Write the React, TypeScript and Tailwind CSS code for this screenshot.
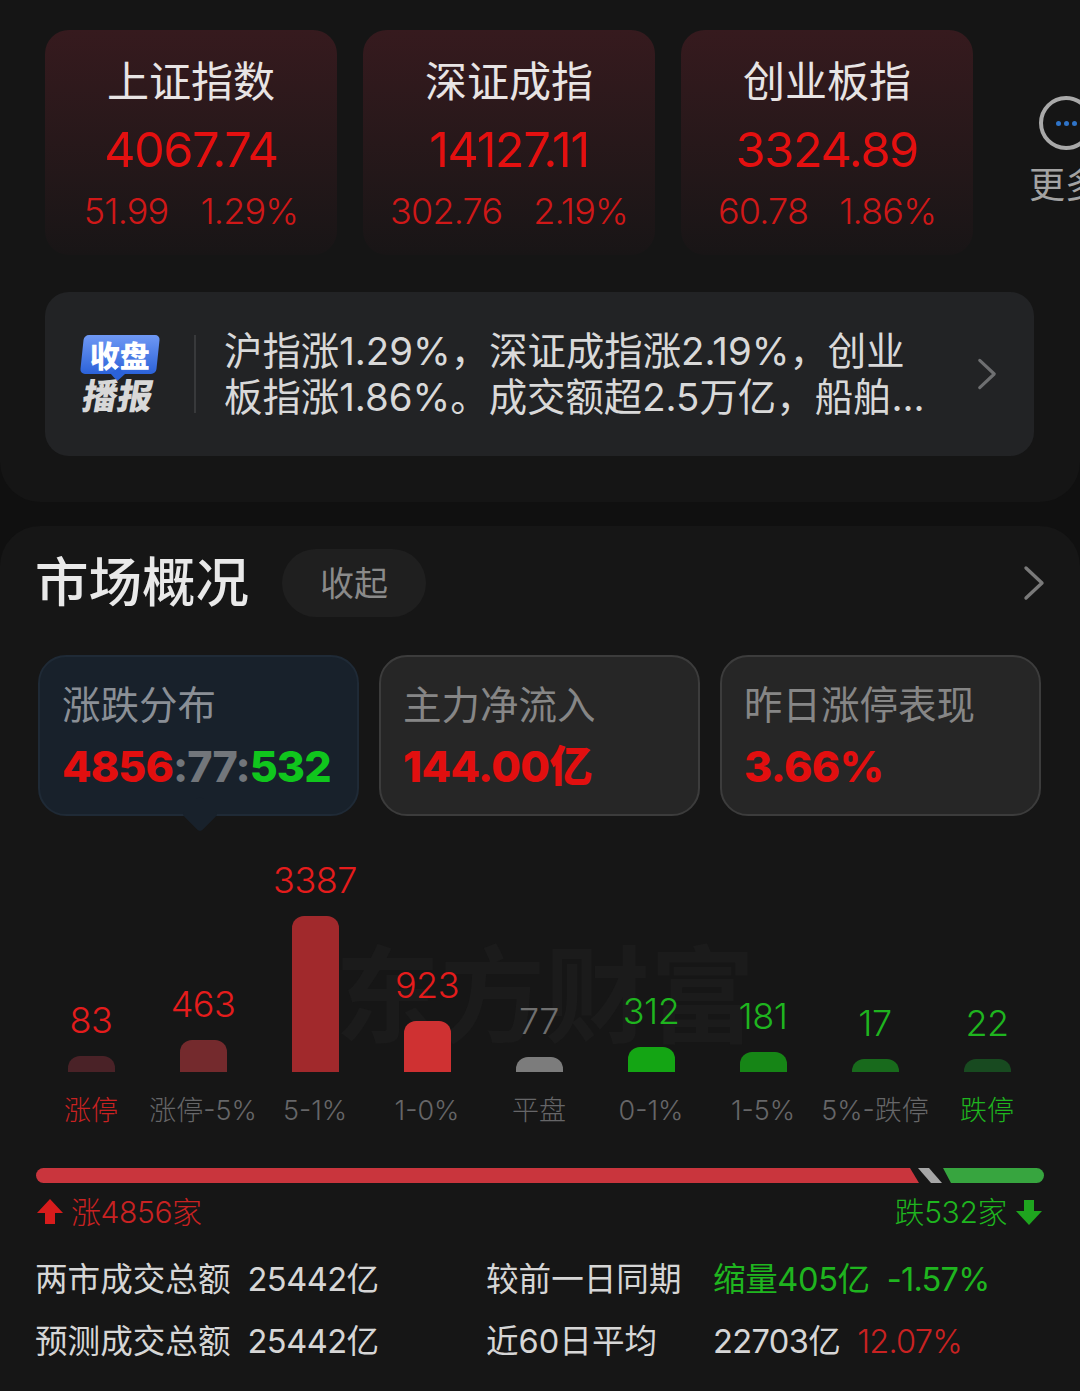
import React from "react";

const indexCards = [
  { name: "上证指数", value: "4067.74", diff: "51.99", pct: "1.29%", gap: "gap-[32px]" },
  { name: "深证成指", value: "14127.11", diff: "302.76", pct: "2.19%", gap: "gap-[31px]" },
  { name: "创业板指", value: "3324.89", diff: "60.78", pct: "1.86%", gap: "gap-[31px]" },
];

const tabs = [
  { label: "主力净流入", value: "144.00亿" },
  { label: "昨日涨停表现", value: "3.66%" },
];

const bars = [
  { value: "83", label: "涨停", h: "h-[16px]", bar: "bg-[#4a2227]", text: "text-[#e51c1c]", labelText: "text-[#c92222]" },
  { value: "463", label: "涨停-5%", h: "h-[32px]", bar: "bg-[#742a2d]", text: "text-[#e51c1c]", labelText: "text-[#666668]" },
  { value: "3387", label: "5-1%", h: "h-[156px]", bar: "bg-[#a1292c]", text: "text-[#e51c1c]", labelText: "text-[#666668]" },
  { value: "923", label: "1-0%", h: "h-[51px]", bar: "bg-[#cf3132]", text: "text-[#e51c1c]", labelText: "text-[#666668]" },
  { value: "77", label: "平盘", h: "h-[15px]", bar: "bg-[#7c7c7c]", text: "text-[#6f6f6f]", labelText: "text-[#666668]" },
  { value: "312", label: "0-1%", h: "h-[25px]", bar: "bg-[#14a514]", text: "text-[#1fb51f]", labelText: "text-[#666668]" },
  { value: "181", label: "1-5%", h: "h-[20px]", bar: "bg-[#168516]", text: "text-[#1fb51f]", labelText: "text-[#666668]" },
  { value: "17", label: "5%-跌停", h: "h-[13px]", bar: "bg-[#186a1c]", text: "text-[#1fb51f]", labelText: "text-[#666668]" },
  { value: "22", label: "跌停", h: "h-[13px]", bar: "bg-[#184a20]", text: "text-[#1fb51f]", labelText: "text-[#1fb51f]" },
];

function Chevron({ className }: { className: string }) {
  return (
    <svg viewBox="0 0 22 36" className={className} fill="none" stroke="currentColor" strokeWidth="3.4" strokeLinecap="round" strokeLinejoin="round">
      <path d="M3 3 L19 18 L3 33" />
    </svg>
  );
}

function Arrow({ down, className }: { down?: boolean; className: string }) {
  return (
    <svg viewBox="0 0 26 26" className={className} fill="currentColor">
      <path d={down ? "M8 1 H18 V12 H26 L13 26 L0 12 H8 Z" : "M8 25 H18 V14 H26 L13 0 L0 14 H8 Z"} />
    </svg>
  );
}

export default function App() {
  return (
    <div className="relative w-[1080px] h-[1391px] overflow-hidden bg-[#101010] font-['Inter','Noto_Sans_CJK_SC',sans-serif]">
      <section className="h-[502px] bg-[#151515] rounded-b-[40px] pt-[30px] pl-[45px]">
        <div className="flex gap-[26px]">
          {indexCards.map((c) => (
            <div key={c.name} className="w-[292px] h-[225px] shrink-0 rounded-[24px] bg-gradient-to-b from-[#361a1e] to-[#181516] flex flex-col items-center">
              <div className="mt-[22px] text-[42px] leading-[60px] text-[#e8e4e4]">{c.name}</div>
              <div className="mt-[7px] text-[48.5px] leading-[62px] tracking-[-1.3px] text-[#e31010]">{c.value}</div>
              <div className={`mt-[8px] flex ${c.gap} text-[36px] leading-[44px] font-light tracking-[-0.8px] text-[#cf1818]`}>
                <span>{c.diff}</span>
                <span>{c.pct}</span>
              </div>
            </div>
          ))}
          <div className="shrink-0 ml-[30px] mt-[67px] flex flex-col w-[60px]">
            <div className="ml-[10px] -mt-[1px] w-[54px] h-[54px] rounded-full border-[4px] border-[#a9a9a9] flex items-center gap-[3px] pl-[13px] shrink-0">
              <span className="w-[5px] h-[5px] rounded-full bg-[#2f74c8] shrink-0" />
              <span className="w-[5px] h-[5px] rounded-full bg-[#2f74c8] shrink-0" />
              <span className="w-[5px] h-[5px] rounded-full bg-[#2f74c8] shrink-0" />
            </div>
            <div className="mt-[13px] text-[36px] leading-[44px] whitespace-nowrap text-[#a3a3a3]">更多</div>
          </div>
        </div>

        <div className="mt-[37px] w-[989px] h-[164px] rounded-[24px] bg-[#222325] flex items-center">
          <div className="w-[149px] shrink-0 pl-[35px]">
            <div className="relative w-[76px] h-[39px] -skew-x-[6deg] ml-[2px] rounded-[5px] bg-gradient-to-b from-[#6f98f4] to-[#2b62d9] flex items-center justify-center text-[30px] leading-[38px] font-black text-white">
              <span className="skew-x-[6deg] translate-y-[1px]">收盘</span>
              <span className="absolute left-[33px] bottom-[-5px] w-[10px] h-[10px] rotate-45 bg-[#2b62d9]" />
            </div>
            <div className="mt-[4px] ml-[3px] text-[35px] leading-[36px] font-black -skew-x-[10deg] text-[#d8d8d8] whitespace-nowrap">播报</div>
          </div>
          <div className="w-[2px] h-[78px] bg-[#38393b] shrink-0" />
          <div className="ml-[28px] w-[722px] text-[38.4px] leading-[46px] text-[#d9d9d9]">
            <div className="whitespace-nowrap">沪指涨1.29%，深证成指涨2.19%，创业</div>
            <div className="whitespace-nowrap">板指涨1.86%。成交额超2.5万亿，船舶...</div>
          </div>
          <Chevron className="ml-[31px] w-[20px] h-[34px] text-[#6e6f71]" />
        </div>
      </section>

      <section className="relative mt-[24px] h-[865px] bg-[#161616] rounded-t-[40px] px-[36px] pt-[23px]">
        <div className="absolute left-[335px] top-[410px] text-[105px] leading-[120px] font-bold whitespace-nowrap text-[#1b1b1b]">东方财富</div>

        <div className="relative flex items-center h-[68px]">
          <div className="-ml-[1px] text-[53.5px] leading-[68px] font-medium text-[#e9e9e9]">市场概况</div>
          <div className="ml-[33px] w-[144px] h-[68px] rounded-full bg-[#1f1f1f] flex items-center justify-center text-[34px] text-[#8a8a8a]">收起</div>
          <Chevron className="ml-auto mr-[-1px] w-[22px] h-[36px] text-[#7a7a7a]" />
        </div>

        <div className="relative mt-[38px] ml-[2px] flex gap-[20px]">
          <div className="relative w-[321px] h-[161px] rounded-[28px] bg-[#18212b] border-2 border-[#1f2a36] pl-[22px] pt-[23px]">
            <div className="text-[38.5px] leading-[50px] text-[#8a8f96]">涨跌分布</div>
            <div className="mt-[10px] text-[43px] leading-[52px] font-extrabold tracking-[-0.9px] whitespace-nowrap">
              <span className="text-[#e20f0f]">4856</span>
              <span className="text-[#72767b]">:77:</span>
              <span className="text-[#10c61d]">532</span>
            </div>
            <span className="absolute left-[147px] bottom-[-13px] w-[26px] h-[26px] rotate-45 rounded-[4px] bg-[#18212b]" />
          </div>
          {tabs.map((t) => (
            <div key={t.label} className="w-[321px] h-[161px] rounded-[28px] bg-[#262626] border-2 border-[#3c3c3c] pl-[22px] pt-[23px]">
              <div className="text-[38.5px] leading-[50px] text-[#868686] whitespace-nowrap">{t.label}</div>
              <div className="mt-[10px] text-[43px] leading-[52px] font-extrabold tracking-[-0.6px] text-[#e20f0f]">{t.value}</div>
            </div>
          ))}
        </div>

        <div className="relative mt-[42px] -ml-[1px] grid grid-cols-9 w-[1008px] h-[214px] items-end">
          {bars.map((b) => (
            <div key={b.label} className="flex flex-col items-center">
              <div className={`mb-[14px] text-[36px] leading-[44px] font-light tracking-[-0.5px] ${b.text}`}>{b.value}</div>
              <div className={`w-[47px] rounded-t-[12px] ${b.h} ${b.bar}`} />
            </div>
          ))}
        </div>
        <div className="relative mt-[21px] -ml-[1px] grid grid-cols-9 w-[1008px]">
          {bars.map((b) => (
            <div key={b.label} className={`text-center whitespace-nowrap text-[27px] leading-[36px] font-light ${b.labelText}`}>{b.label}</div>
          ))}
        </div>

        <div className="relative mt-[39px] flex w-[1008px] h-[15px]">
          <div className="w-[883px] rounded-l-full bg-[#c9353d] [clip-path:polygon(0_0,874px_0,100%_100%,0_100%)] shrink-0" />
          <div className="w-[24px] -ml-[1px] bg-[#a6a6a6] [clip-path:polygon(0_0,11px_0,100%_100%,13px_100%)] shrink-0" />
          <div className="flex-1 ml-[1px] rounded-r-full bg-[#37a53f] [clip-path:polygon(0_0,100%_0,100%_100%,8px_100%)]" />
        </div>

        <div className="mt-[11px] flex items-center w-[1008px] h-[36px] text-[30px] leading-[36px] font-light tracking-[-0.4px]">
          <Arrow className="ml-[1px] w-[26px] h-[26px] text-[#d81c1c]" />
          <span className="ml-[8px] text-[#c92222]">涨4856家</span>
          <span className="ml-auto text-[#1fb51f]">跌532家</span>
          <Arrow down className="ml-[9px] mr-[2px] w-[26px] h-[26px] text-[#1fa51f]" />
        </div>

        <div className="mt-[28px] -ml-[1px] grid grid-cols-[451px_227px_auto] gap-y-[20px] text-[32.6px] leading-[42px] whitespace-nowrap text-[#d6d6d6]">
          <div className="flex gap-[17px]"><span>两市成交总额</span><span className="tracking-[-0.5px]">25442亿</span></div>
          <div>较前一日同期</div>
          <div className="flex gap-[17px] text-[#1fb51f]"><span className="tracking-[-0.4px]">缩量405亿</span><span className="tracking-[-0.8px]">-1.57%</span></div>
          <div className="flex gap-[17px]"><span>预测成交总额</span><span className="tracking-[-0.5px]">25442亿</span></div>
          <div>近60日平均</div>
          <div className="flex gap-[17px]"><span className="tracking-[-0.6px]">22703亿</span><span className="text-[#c92222] font-light tracking-[-0.8px]">12.07%</span></div>
        </div>
      </section>
    </div>
  );
}
